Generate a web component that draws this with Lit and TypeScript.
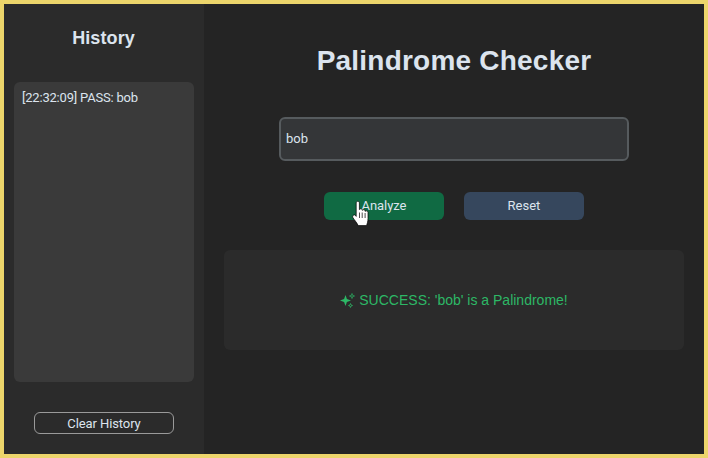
import { LitElement, html, css } from "lit";
import { customElement } from "lit/decorators.js";

@customElement("app-root")
export class AppRoot extends LitElement {
  static styles = css`
    :host { display: block; width: 708px; height: 458px; position: relative; overflow: hidden; }
    .frame { box-sizing: border-box; width: 708px; height: 458px; border: 4px solid #ecd56b; display: flex; background: #242424; font-family: Roboto, sans-serif; }
    .side { width: 200px; background: #2b2b2b; display: flex; flex-direction: column; align-items: center; box-sizing: border-box; padding: 10px 10px 0; }
    .side h2 { margin: 13px 1px 0 0; font: bold 18px/22px "Liberation Sans", sans-serif; color: #dce4ee; letter-spacing: 0.1px; }
    .log { margin-top: 33px; box-sizing: border-box; width: 180px; height: 300px; background: #3a3a3a; border-radius: 6px; padding: 8px; font-size: 13px; line-height: 16px; color: #dce4ee; letter-spacing: -0.2px; }
    .clear { margin-top: 30px; box-sizing: border-box; width: 140px; height: 22px; border: 1px solid #9a9a9a; border-radius: 6px; color: #dce4ee; font-size: 13px; line-height: 21px; text-align: center; letter-spacing: -0.1px; }
    .main { flex: 1; display: flex; flex-direction: column; align-items: center; padding: 0 20px; }
    h1 { margin: 39px 0 0; font: bold 28px/36px "Liberation Sans", sans-serif; color: #dce4ee; letter-spacing: 0.22px; }
    .input { margin-top: 38px; box-sizing: border-box; width: 350px; height: 44px; background: #343638; border: 2px solid #565b5e; border-radius: 6px; padding: 0 5px; font-size: 13px; line-height: 40px; color: #dce4ee; }
    .btns { margin-top: 31px; display: flex; gap: 20px; }
    .btn { width: 120px; height: 28px; border-radius: 6px; color: #dce4ee; font-size: 13px; line-height: 27px; text-align: center; }
    .go { background: #106a43; letter-spacing: -0.05px; }
    .reset { background: #36475d; }
    .result { margin-top: 30px; width: 460px; height: 100px; border-radius: 6px; background: #2b2b2b; display: flex; align-items: center; justify-content: center; gap: 4px; color: #2db866; font: 14px/18px "Liberation Sans", sans-serif; }
    .result svg { width: 15px; height: 15px; }
    .cursor { position: absolute; left: 352px; top: 200px; width: 18px; height: 27px; }
  `;
  render() {
    return html`
      <div class="frame">
        <div class="side">
          <h2>History</h2>
          <div class="log">[22:32:09] PASS: bob</div>
          <div class="clear">Clear History</div>
        </div>
        <div class="main">
          <h1>Palindrome Checker</h1>
          <div class="input">bob</div>
          <div class="btns">
            <div class="btn go">Analyze</div>
            <div class="btn reset">Reset</div>
          </div>
          <div class="result">
            <svg viewBox="0 0 15 15" fill="#2db866">
              <path d="M5.5 2 L6.9 6.1 L11 7.5 L6.9 8.9 L5.5 13 L4.1 8.9 L0 7.5 L4.1 6.1 Z" />
              <path d="M12 .5 L12.6 2.4 L14.5 3 L12.6 3.6 L12 5.5 L11.4 3.6 L9.5 3 L11.4 2.4 Z" fill="none" stroke="#2db866" stroke-width=".7" />
              <path d="M10.5 10.5 L11 12 L12.5 12.5 L11 13 L10.5 14.5 L10 13 L8.5 12.5 L10 12 Z" fill="none" stroke="#2db866" stroke-width=".7" />
            </svg>
            <span>SUCCESS: 'bob' is a Palindrome!</span>
          </div>
        </div>
      </div>
      <svg class="cursor" viewBox="0 0 18 27">
        <path d="M4.2 3 C4.2 .8 7.4 .8 7.4 3 V9.6 C8 8.4 10 8.6 10.3 9.8 V10.4 C10.8 9.3 12.9 9.5 13.2 10.8 V11.4 C13.8 10.4 16 10.8 16 12.5 V18.5 C16 21.5 15.2 23.4 14.6 25.6 H6.2 C5.2 23.2 2.4 20 .9 17.6 C-.1 15.8 2.2 14 3.4 15.4 L4.2 16.4 Z" fill="#fff" stroke="#000" stroke-width=".7" stroke-linejoin="round"/>
        <path d="M7.5 12.5v5.5M10.2 12.5v5.5M13.1 13v5" stroke="#000" stroke-width=".7" fill="none"/>
      </svg>
    `;
  }
}
